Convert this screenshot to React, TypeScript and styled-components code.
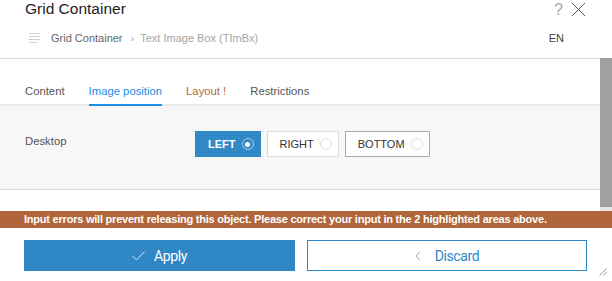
import React from 'react';
import styled, { createGlobalStyle } from 'styled-components';

const GlobalStyle = createGlobalStyle`
  html, body {
    margin: 0;
    padding: 0;
    background: #fff;
  }
  body {
    font-family: "Liberation Sans", Arial, sans-serif;
    color: #333;
  }
`;

const tabs = [
  { label: 'Content', state: 'normal' },
  { label: 'Image position', state: 'active' },
  { label: 'Layout !', state: 'error' },
  { label: 'Restrictions', state: 'normal' },
];

const positions = [
  { label: 'LEFT', selected: true, border: '#3189c6' },
  { label: 'RIGHT', selected: false, border: '#dcdcdc' },
  { label: 'BOTTOM', selected: false, border: '#ababab' },
];

const App = () => {
  return (
    <>
      <GlobalStyle />
      <Page>
        <Header>
          <TitleRow>
            <Title>Grid Container</Title>
            <WindowTools>
              <Help>?</Help>
              <svg width="15" height="15" viewBox="0 0 15 15">
                <path d="M1 1 L14 14 M14 1 L1 14" stroke="#555" strokeWidth="1" fill="none" />
              </svg>
            </WindowTools>
          </TitleRow>
          <CrumbRow>
            <Crumbs>
              <svg width="12" height="10" viewBox="0 0 12 10">
                <path d="M0 0.5 H11 M0 3.5 H11 M0 6.5 H11 M0 9.5 H8" stroke="#cfcfcf" strokeWidth="1" />
              </svg>
              <CrumbLink>Grid Container</CrumbLink>
              <CrumbSep>›</CrumbSep>
              <CrumbCurrent>Text Image Box (TImBx)</CrumbCurrent>
            </Crumbs>
            <Lang>EN</Lang>
          </CrumbRow>
        </Header>

        <Body>
          <TabBar>
            {tabs.map((t) => (
              <Tab key={t.label} $state={t.state}>
                {t.label}
              </Tab>
            ))}
          </TabBar>
          <Panel>
            <FieldLabel>Desktop</FieldLabel>
            <Choices>
              {positions.map((p) => (
                <Choice key={p.label} $selected={p.selected} $border={p.border}>
                  {p.label}
                  <Radio $selected={p.selected} />
                </Choice>
              ))}
            </Choices>
          </Panel>
          <Spacer />
          <ScrollTrack>
            <ScrollThumb />
          </ScrollTrack>
        </Body>

        <ErrorBar>
          Input errors will prevent releasing this object. Please correct your input in the 2 highlighted areas above.
        </ErrorBar>

        <Footer>
          <ApplyButton>
            <svg width="13" height="10" viewBox="0 0 13 10">
              <path d="M0.5 5 L4.5 9 L12.5 0.5" stroke="#d6e6f3" strokeWidth="1" fill="none" />
            </svg>
            Apply
          </ApplyButton>
          <DiscardButton>
            <svg width="6" height="10" viewBox="0 0 6 10">
              <path d="M5 0.5 L1 5 L5 9.5" stroke="#7fb1d9" strokeWidth="1" fill="none" />
            </svg>
            Discard
          </DiscardButton>
          <ResizeGrip width="8" height="8" viewBox="0 0 8 8">
            <path d="M7.5 0.5 L0.5 7.5 M7.5 4 L4 7.5" stroke="#999" strokeWidth="1" />
          </ResizeGrip>
        </Footer>
      </Page>
    </>
  );
};

export default App;

const Page = styled.div`
  position: relative;
  width: 612px;
  height: 281px;
  overflow: hidden;
  display: flex;
  flex-direction: column;
`;

const Header = styled.header`
  height: 58px;
  border-bottom: 1px solid #dcdcdc;
  padding: 0 26px 0 25px;
  box-sizing: content-box;
`;

const TitleRow = styled.div`
  display: flex;
  justify-content: space-between;
  align-items: flex-start;
  height: 18px;
`;

const Title = styled.h1`
  margin: 0;
  font-size: 15.5px;
  line-height: 18px;
  font-weight: 400;
  color: #222;
`;

const WindowTools = styled.div`
  display: flex;
  align-items: center;
  gap: 8px;
  padding-top: 2px;
`;

const Help = styled.span`
  font-size: 16px;
  line-height: 15px;
  color: #a8a8a8;
  font-weight: 400;
`;

const CrumbRow = styled.div`
  display: flex;
  justify-content: space-between;
  align-items: center;
  margin-top: 12px;
  height: 16px;
`;

const Crumbs = styled.div`
  display: flex;
  align-items: center;
  padding-left: 4px;
  font-size: 11px;
  line-height: 16px;
  svg {
    margin-right: 10px;
  }
`;

const CrumbLink = styled.span`
  color: #666;
`;

const CrumbSep = styled.span`
  color: #aaa;
  margin: 0 6px 0 8px;
`;

const CrumbCurrent = styled.span`
  color: #a5a5a5;
`;

const Lang = styled.span`
  font-size: 11px;
  color: #444;
  margin-right: 22px;
`;

const Body = styled.div`
  position: relative;
`;

const TabBar = styled.nav`
  display: flex;
  align-items: flex-end;
  gap: 24px;
  height: 45px;
  padding: 0 25px;
  border-bottom: 2px solid #e9e9e9;
`;

const Tab = styled.div<{ $state: string }>`
  font-size: 11.3px;
  line-height: 14px;
  padding-bottom: 6px;
  margin-bottom: -2px;
  border-bottom: 2px solid ${(p) => (p.$state === 'active' ? '#1b8fe6' : 'transparent')};
  color: ${(p) => (p.$state === 'active' ? '#1b8fe6' : p.$state === 'error' ? '#b5693a' : '#555')};
`;

const Panel = styled.section`
  display: flex;
  align-items: flex-start;
  height: 58px;
  padding: 25px 0 0 25px;
  background: #f7f7f7;
  border-bottom: 1px solid #d9d9d9;
`;

const FieldLabel = styled.div`
  width: 170px;
  margin-top: 3px;
  font-size: 11.3px;
  line-height: 14px;
  color: #555;
`;

const Choices = styled.div`
  display: flex;
  gap: 6px;
`;

const Choice = styled.button<{ $selected: boolean; $border: string }>`
  display: flex;
  align-items: center;
  gap: 6px;
  height: 26px;
  padding: 0 6px 0 12px;
  font-family: "Liberation Sans", Arial, sans-serif;
  font-size: 11px;
  letter-spacing: 0;
  font-weight: ${(p) => (p.$selected ? 700 : 400)};
  color: ${(p) => (p.$selected ? '#fff' : '#333')};
  background: ${(p) => (p.$selected ? '#3189c6' : '#fff')};
  border: 1px solid ${(p) => p.$border};
  border-radius: 0;
  box-sizing: border-box;
  cursor: pointer;
`;

const Radio = styled.span<{ $selected: boolean }>`
  position: relative;
  width: 12px;
  height: 12px;
  border-radius: 50%;
  box-sizing: border-box;
  border: 1px solid ${(p) => (p.$selected ? 'rgba(255,255,255,0.55)' : '#dedede')};
  background: ${(p) => (p.$selected ? 'transparent' : '#fff')};
  &::after {
    content: '';
    display: ${(p) => (p.$selected ? 'block' : 'none')};
    position: absolute;
    left: 2.5px;
    top: 2.5px;
    width: 5px;
    height: 5px;
    border-radius: 50%;
    background: #fff;
  }
`;

const Spacer = styled.div`
  height: 21px;
`;

const ScrollTrack = styled.div`
  position: absolute;
  top: -1px;
  right: 0;
  bottom: 0;
  width: 12px;
  background: #e6e6e6;
`;

const ScrollThumb = styled.div`
  height: 149px;
  background: #a0a0a0;
`;

const ErrorBar = styled.div`
  height: 17px;
  line-height: 17px;
  padding-left: 24px;
  background: #b0653a;
  color: #fff;
  font-family: "Liberation Sans", Arial, sans-serif;
  font-size: 11px;
  font-weight: 700;
  letter-spacing: -0.22px;
  white-space: nowrap;
`;

const Footer = styled.footer`
  position: relative;
  display: flex;
  gap: 12px;
  padding: 12px 25px 0 24px;
`;

const BaseButton = styled.button`
  display: flex;
  align-items: center;
  justify-content: center;
  gap: 9px;
  height: 31px;
  font-family: Roboto, "Liberation Sans", Arial, sans-serif;
  font-size: 14px;
  letter-spacing: -0.4px;
  border-radius: 0;
  box-sizing: border-box;
  cursor: pointer;
`;

const ApplyButton = styled(BaseButton)`
  width: 271px;
  background: #2f88c5;
  color: #fff;
  border: 1px solid #2f88c5;
`;

const DiscardButton = styled(BaseButton)`
  flex: 1;
  background: #fff;
  color: #2f88c5;
  border: 1px solid #2f88c5;
  gap: 14px;
  padding-left: 6px;
`;

const ResizeGrip = styled.svg`
  position: absolute;
  right: 5px;
  top: 40px;
`;
